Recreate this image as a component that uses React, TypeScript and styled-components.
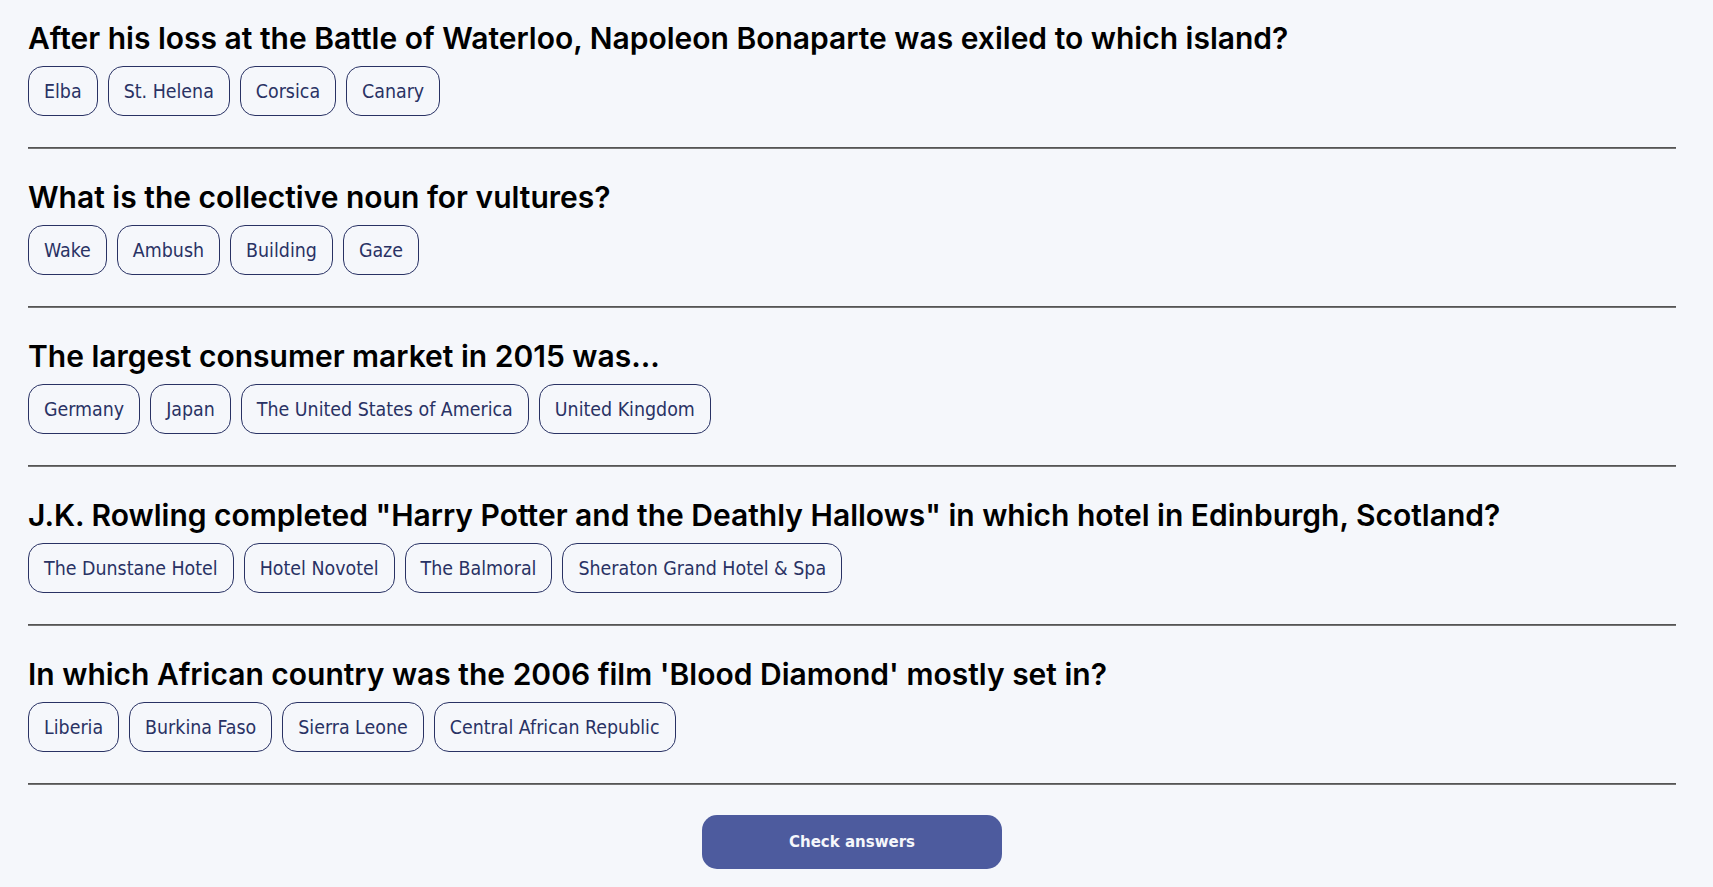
import * as React from "react"
import styled, {createGlobalStyle} from "styled-components"

const GlobalStyle = createGlobalStyle`
  html, body {
    margin: 0;
    background: #f5f7fb;
  }
`

const Page = styled.main`
  padding: 20px 37px 40px 28px;
  min-height: 100vh;
  box-sizing: border-box;
`

const Question = styled.section`
  display: flex;
  flex-direction: column;
`

const Title = styled.h2`
  margin: 0;
  font-family: Inter, "Noto Sans", sans-serif;
  font-weight: 600;
  font-size: 30px;
  line-height: 36px;
  color: #000;
`

const Options = styled.div`
  display: flex;
  gap: 10px;
  margin-top: 10px;
`

const Option = styled.button`
  height: 50px;
  padding: 0 15px;
  border: 1px solid #293264;
  border-radius: 15px;
  background: transparent;
  color: #293264;
  font-family: "DejaVu Sans Condensed", "DejaVu Sans", sans-serif;
  font-size: 19.4px;
  cursor: pointer;
`

const Divider = styled.hr`
  margin: 31px 0 30px;
  height: 0;
  border: none;
  border-top: 1px solid #555555;
  border-bottom: 1px solid #737373;
`

const Footer = styled.div`
  display: flex;
  justify-content: center;
`

const CheckButton = styled.button`
  width: 300px;
  height: 54px;
  border: none;
  border-radius: 15px;
  background: #4d5b9e;
  color: #f5f7fb;
  font-family: "DejaVu Sans", Verdana, sans-serif;
  font-weight: 700;
  font-size: 15px;
  cursor: pointer;
`

const questions = [
  {
    question: "After his loss at the Battle of Waterloo, Napoleon Bonaparte was exiled to which island?",
    answers: ["Elba", "St. Helena", "Corsica", "Canary"]
  },
  {
    question: "What is the collective noun for vultures?",
    answers: ["Wake", "Ambush", "Building", "Gaze"]
  },
  {
    question: "The largest consumer market in 2015 was...",
    answers: ["Germany", "Japan", "The United States of America", "United Kingdom"]
  },
  {
    question: 'J.K. Rowling completed "Harry Potter and the Deathly Hallows" in which hotel in Edinburgh, Scotland?',
    answers: ["The Dunstane Hotel", "Hotel Novotel", "The Balmoral", "Sheraton Grand Hotel & Spa"]
  },
  {
    question: "In which African country was the 2006 film 'Blood Diamond' mostly set in?",
    answers: ["Liberia", "Burkina Faso", "Sierra Leone", "Central African Republic"]
  }
]

export default function App() {
  return (
    <Page>
      <GlobalStyle />
      {questions.map(q => (
        <Question key={q.question}>
          <Title>{q.question}</Title>
          <Options>
            {q.answers.map(a => <Option key={a}>{a}</Option>)}
          </Options>
          <Divider />
        </Question>
      ))}
      <Footer>
        <CheckButton>Check answers</CheckButton>
      </Footer>
    </Page>
  )
}
